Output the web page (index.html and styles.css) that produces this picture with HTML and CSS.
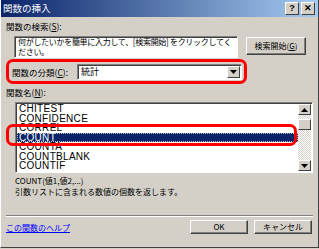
FILE: index.html
```html
<!DOCTYPE html>
<html lang="ja">
<head>
    <meta charset="UTF-8">
    <title>関数の挿入</title>
    <link rel="stylesheet" href="styles.css">
</head>
<body>
    <div class="window">
        <div class="titlebar">
            <span class="title">関数の挿入</span>
            <span class="tbtn">?</span>
            <span class="tbtn">&#x2715;</span>
        </div>

        <div class="content">
            <div class="label">関数の検索(<u>S</u>):</div>
            <div class="search-row">
                <div class="search-box">何がしたいかを簡単に入力して、[検索開始] をクリックしてください。</div>
                <div class="btn search-btn">検索開始(<u>G</u>)</div>
            </div>

            <div class="category mark">
                <span class="cat-label">関数の分類(<u>C</u>):</span>
                <div class="select">
                    <span class="select-text">統計</span>
                    <span class="drop"><svg width="7" height="4" viewBox="0 0 7 4"><path d="M0 0H7L3.5 4Z" fill="#000"/></svg></span>
                </div>
            </div>

            <div class="label">関数名(<u>N</u>):</div>
            <div class="listbox">
                <ul class="items">
                    <li>CHITEST</li>
                    <li>CONFIDENCE</li>
                    <li>CORREL</li>
                    <li class="selected">COUNT</li>
                    <li>COUNTA</li>
                    <li>COUNTBLANK</li>
                    <li>COUNTIF</li>
                </ul>
                <div class="scrollbar">
                    <span class="sbtn"><svg width="7" height="4" viewBox="0 0 7 4"><path d="M0 4H7L3.5 0Z" fill="#000"/></svg></span>
                    <div class="track"><span class="thumb"></span></div>
                    <span class="sbtn"><svg width="7" height="4" viewBox="0 0 7 4"><path d="M0 0H7L3.5 4Z" fill="#000"/></svg></span>
                </div>
                <div class="row-mark"></div>
            </div>

            <div class="desc">
                <div>COUNT(値1,値2,...)</div>
                <div>引数リストに含まれる数値の個数を返します。</div>
            </div>

            <div class="separator"></div>

            <div class="footer">
                <a class="help" href="#">この関数のヘルプ</a>
                <div class="btn ok">OK</div>
                <div class="btn cancel">キャンセル</div>
            </div>
        </div>
    </div>
</body>
</html>
```

FILE: styles.css
```css
body {
    margin: 0;
    font-family: "Noto Sans CJK JP", "Liberation Sans", sans-serif;
    font-size: 8px;
    color: #000;
    background: #d4d0c8;
}

.window {
    width: 317px;
    height: 247px;
    background: #d4d0c8;
    border-right: 1px solid #404040;
    border-bottom: 1px solid #404040;
    border-left: 1px solid #fff;
    overflow: hidden;
}

.titlebar {
    height: 17px;
    background: linear-gradient(to right, #0a246a, #a6caf0);
    display: flex;
    align-items: center;
    padding: 0 3px 0 2px;
}

.title {
    color: #fff;
    font-size: 9.5px;
    flex: 1;
    line-height: 17px;
}

.tbtn {
    width: 12px;
    height: 11px;
    margin-left: 2px;
    background: #d4d0c8;
    border: 1px solid;
    border-color: #fff #404040 #404040 #fff;
    font: bold 9px/11px "Liberation Sans", sans-serif;
    text-align: center;
}

.content {
    padding: 3px 5px 0 5px;
}

.label {
    height: 12px;
    line-height: 12px;
    font-size: 8.5px;
}

.search-row {
    display: flex;
    align-items: flex-start;
    margin-top: 4px;
    padding-left: 8px;
}

.search-box {
    width: 218px;
    height: 20px;
    background: #fff;
    border: 1px solid;
    border-color: #808080 #fff #fff #808080;
    box-shadow: inset 1px 1px 0 #404040;
    padding: 0 1px 0 3px;
    line-height: 10px;
    letter-spacing: -0.3px;
    overflow: hidden;
}

.btn {
    background: #d4d0c8;
    border: 1px solid;
    border-color: #fff #404040 #404040 #fff;
    box-shadow: inset -1px -1px 0 #808080;
    text-align: center;
}

.search-btn {
    width: 58px;
    height: 16px;
    line-height: 16px;
    margin-left: 8px;
    margin-top: 1px;
}

.category {
    display: flex;
    align-items: center;
    height: 19px;
    margin-top: 1px;
    margin-right: 66px;
    padding: 0 2px 0 3px;
}

.mark {
    border: 3px solid #ff0000;
    border-radius: 7px;
}

.cat-label {
    width: 65px;
    white-space: nowrap;
    font-size: 8.5px;
}

.select {
    flex: 1;
    height: 14px;
    display: flex;
    align-items: center;
    background: #fff;
    border: 1px solid;
    border-color: #808080 #fff #fff #808080;
    box-shadow: inset 1px 1px 0 #404040;
    padding: 0 1px 0 3px;
    font-size: 9px;
}

.select-text {
    flex: 1;
    line-height: 14px;
}

.drop {
    width: 11px;
    height: 10px;
    display: flex;
    align-items: center;
    justify-content: center;
    background: #d4d0c8;
    border: 1px solid;
    border-color: #fff #404040 #404040 #fff;
}

.category + .label {
    margin-top: 2px;
}

.listbox {
    position: relative;
    display: flex;
    margin: 4px 0 0 9px;
    height: 69px;
    width: 296px;
    background: #fff;
    border: 1px solid;
    border-color: #808080 #fff #fff #808080;
    box-shadow: inset 1px 1px 0 #404040;
}

.items {
    flex: 1;
    list-style: none;
    margin: 1px 0 0 1px;
    padding: 0;
    font-family: "Liberation Sans", sans-serif;
    font-size: 10px;
    letter-spacing: 0.3px;
}

.items li {
    height: 9.5px;
    line-height: 10px;
    padding-left: 2px;
}

.items li.selected {
    background: #0a246a;
    color: #fff;
    outline: 1px dotted #c0c0c0;
    outline-offset: -1px;
}

.scrollbar {
    width: 13px;
    margin: 1px 1px 1px 0;
    display: flex;
    flex-direction: column;
}

.sbtn {
    height: 9px;
    display: flex;
    align-items: center;
    justify-content: center;
    background: #d4d0c8;
    border: 1px solid;
    border-color: #fff #404040 #404040 #fff;
}

.track {
    flex: 1;
    background-image: repeating-conic-gradient(#d4d0c8 0 25%, #fff 0 50%);
    background-size: 2px 2px;
}

.thumb {
    display: block;
    height: 9px;
    margin-top: 4px;
    background: #d4d0c8;
    border: 1px solid;
    border-color: #fff #404040 #404040 #fff;
}

.row-mark {
    position: absolute;
    left: -10px;
    top: 21px;
    width: 285px;
    height: 16px;
    border: 3px solid #ff0000;
    border-radius: 7px;
}

.desc {
    margin: 2px 0 0 9px;
    line-height: 11px;
}

.separator {
    height: 0;
    margin-top: 18px;
    border-top: 1px solid #808080;
    border-bottom: 1px solid #fff;
}

.footer {
    display: flex;
    align-items: center;
    margin-top: 3px;
}

.help {
    flex: 1;
    color: #0000ff;
    text-decoration: underline;
}

.ok, .cancel {
    width: 56px;
    height: 12px;
    line-height: 12px;
}

.cancel {
    margin-left: 6px;
    margin-right: 1px;
}
```
